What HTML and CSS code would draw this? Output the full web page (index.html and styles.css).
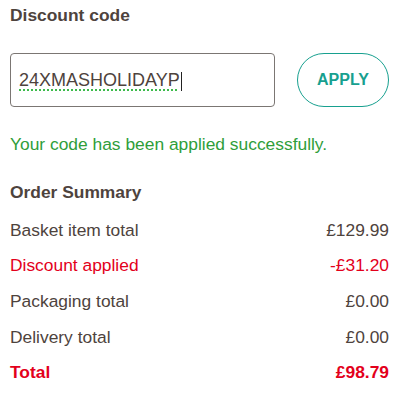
FILE: index.html
```html
<!DOCTYPE html>
<html lang="en">
<head>
    <meta charset="UTF-8">
    <meta name="viewport" content="width=device-width, initial-scale=1.0">
    <title>Discount and Order Summary</title>
    <link rel="stylesheet" href="styles.css">
</head>
<body>
    <div class="container">
        <h2 class="section-title">Discount code</h2>

        <div class="code-form">
            <div class="code-input">
                <span class="code-text">24XMASHOLIDAYP</span><span class="caret"></span>
            </div>
            <button class="apply-btn" type="button">APPLY</button>
        </div>

        <p class="success">Your code has been applied successfully.</p>

        <h2 class="section-title summary-title">Order Summary</h2>

        <div class="summary">
            <div class="row">
                <span>Basket item total</span>
                <span>£129.99</span>
            </div>
            <div class="row discount">
                <span>Discount applied</span>
                <span>-£31.20</span>
            </div>
            <div class="row">
                <span>Packaging total</span>
                <span>£0.00</span>
            </div>
            <div class="row">
                <span>Delivery total</span>
                <span>£0.00</span>
            </div>
            <div class="row total">
                <span>Total</span>
                <span>£98.79</span>
            </div>
        </div>
    </div>
</body>
</html>
```

FILE: styles.css
```css
body {
    font-family: 'Liberation Sans', Arial, sans-serif;
    background-color: #fff;
    color: #4e433d;
    margin: 0;
    padding: 0;
}
.container {
    padding: 5px 15px 0 10px;
    font-size: 17.4px;
    line-height: 20px;
}
.section-title {
    font-size: 17.4px;
    line-height: 20px;
    font-weight: bold;
    margin: 0;
}
.code-form {
    display: flex;
    align-items: center;
    margin-top: 28px;
}
.code-input {
    box-sizing: border-box;
    width: 265px;
    height: 54px;
    padding: 0 8px;
    border: 1px solid #7b7673;
    border-radius: 4px;
    display: flex;
    align-items: center;
    font-size: 18px;
    color: #4e433d;
}
.code-text {
    text-decoration: underline dotted #3dbb4c;
    text-decoration-thickness: 2px;
    text-underline-offset: 3px;
}
.caret {
    display: inline-block;
    width: 1px;
    height: 19px;
    margin-left: 1px;
    margin-top: 2px;
    background: #222;
}
.apply-btn {
    box-sizing: border-box;
    width: 92px;
    height: 54px;
    margin-left: 22px;
    background: #fff;
    border: 1px solid #17a08f;
    border-radius: 27px;
    color: #17a08f;
    font-family: 'Liberation Sans', Arial, sans-serif;
    font-size: 16px;
    font-weight: bold;
    padding: 0;
}
.success {
    color: #2f9e3a;
    margin: 27px 0 0;
}
.summary-title {
    margin-top: 28px;
}
.summary {
    margin-top: 10px;
}
.row {
    display: flex;
    justify-content: space-between;
    padding: 7.8px 0;
}
.discount {
    color: #e3001b;
}
.total {
    color: #e3001b;
    font-weight: bold;
}
```
